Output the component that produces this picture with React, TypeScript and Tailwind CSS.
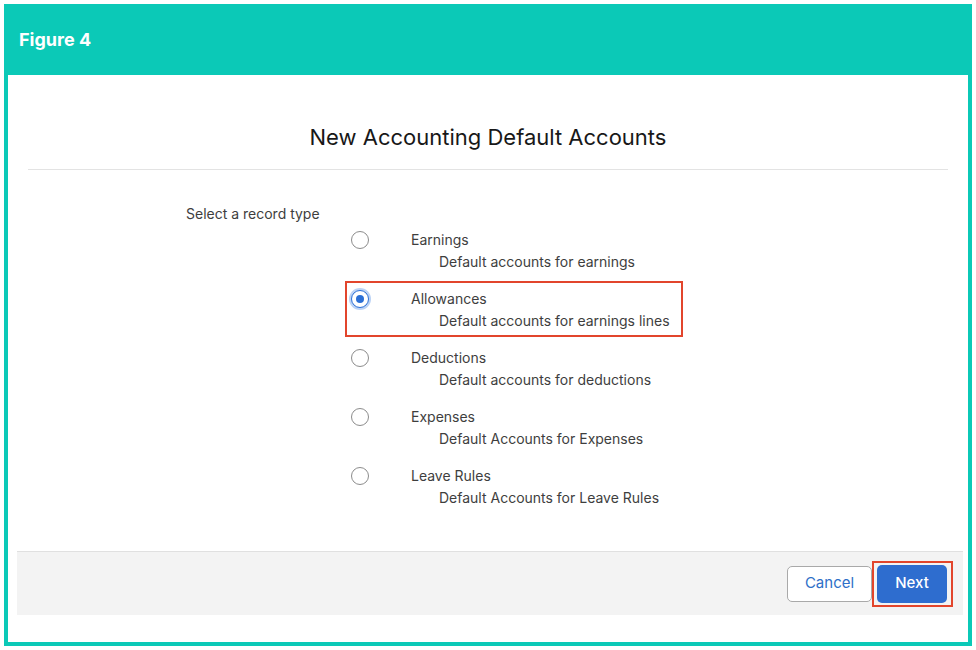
import React from 'react';

interface RecordType {
  label: string;
  description: string;
}

const recordTypes: RecordType[] = [
  { label: 'Earnings', description: 'Default accounts for earnings' },
  { label: 'Allowances', description: 'Default accounts for earnings lines' },
  { label: 'Deductions', description: 'Default accounts for deductions' },
  { label: 'Expenses', description: 'Default Accounts for Expenses' },
  { label: 'Leave Rules', description: 'Default Accounts for Leave Rules' },
];

function Radio({ checked }: { checked: boolean }) {
  if (checked) {
    return (
      <span className="flex h-[18px] w-[18px] items-center justify-center rounded-full border border-[#2b6fd6] bg-white shadow-[0_0_0_2px_#bcd3f5]">
        <span className="h-[8px] w-[8px] rounded-full bg-[#2b6fd6]" />
      </span>
    );
  }
  return <span className="block h-[18px] w-[18px] rounded-full border border-[#8c8c8c] bg-white" />;
}

export default function App() {
  const selected = 'Allowances';

  return (
    <div className="min-h-[650px] w-[976px] bg-white p-[4px] font-['Inter',sans-serif]">
      <div className="flex h-[642px] w-[968px] flex-col bg-[#0bc9b7] px-[4px] pb-[4px]">
        <div className="flex h-[71px] items-center pl-[11px]">
          <span className="text-[18px] font-bold text-white">Figure 4</span>
        </div>

        <div className="flex flex-1 flex-col bg-white">
          <div className="mx-[20px] border-b border-[#e3e3e3] pt-[48px] pb-[18px] text-center">
            <h1 className="text-[22px] leading-[28px] text-[#181818]">New Accounting Default Accounts</h1>
          </div>

          <div className="pl-[178px] pt-[36px]">
            <p className="text-[14px] leading-[16px] text-[#3e3e3e]">Select a record type</p>
          </div>

          <div className="ml-[337px] flex w-[338px] flex-col gap-[3px]">
            {recordTypes.map((t) => {
              const isSel = t.label === selected;
              return (
                <div
                  key={t.label}
                  className={
                    isSel
                      ? 'h-[56px] border-2 border-[#e2452c] pt-[6px]'
                      : 'h-[56px] border-2 border-transparent pt-[6px]'
                  }
                >
                  <div className="flex h-[20px] items-center pl-[4px]">
                    <Radio checked={isSel} />
                    <span className="ml-[42px] text-[14px] leading-[20px] text-[#3e3e3e]">{t.label}</span>
                  </div>
                  <div className="mt-[2px] pl-[92px] text-[14px] leading-[20px] text-[#3e3e3e]">
                    {t.description}
                  </div>
                </div>
              );
            })}
          </div>

          <div className="mt-[37px] ml-[9px] mr-[5px] flex h-[64px] items-center justify-end border-t border-[#e0e0e0] bg-[#f3f3f3] pr-[10px]">
            <button className="h-[36px] w-[85px] rounded-[5px] border border-[#a9a9a9] bg-white text-[15px] text-[#2e6fc8]">
              Cancel
            </button>
            <div className="border-2 border-[#e2452c] py-[2px] pl-[3px] pr-[4px]">
              <button className="h-[38px] w-[70px] rounded-[5px] bg-[#2e6dcf] text-[15px] font-medium text-white">
                Next
              </button>
            </div>
          </div>
        </div>
      </div>
    </div>
  );
}
